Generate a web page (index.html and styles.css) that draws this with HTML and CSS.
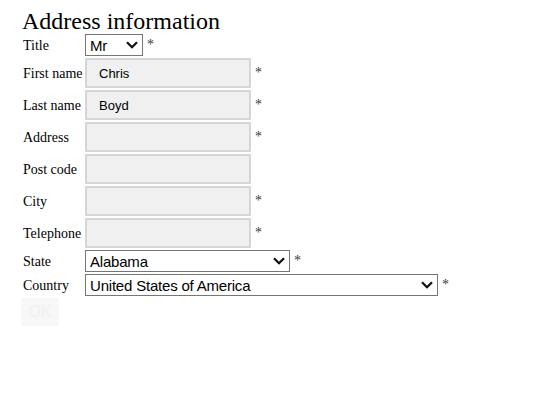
FILE: index.html
```html
<!DOCTYPE html>
<html lang="en">
<head>
  <meta charset="UTF-8" />
  <title>Address information</title>
  <link rel="stylesheet" href="styles.css">
</head>
<body>
  <h2 class="page-title">Address information</h2>

  <div class="address-form">
    <label class="field-label">Title</label>
    <div class="field">
      <span class="select-wrap">
        <select class="select select-title">
          <option>Mr</option>
          <option>Mrs</option>
          <option>Ms</option>
        </select>
        <svg class="chevron" width="12" height="8" viewBox="0 0 12 8"><path d="M1 1.2l5 5 5-5" fill="none" stroke="#111" stroke-width="2.3"/></svg>
      </span>
      <span class="required">*</span>
    </div>

    <label class="field-label">First name</label>
    <div class="field">
      <input type="text" class="text-input" value="Chris">
      <span class="required">*</span>
    </div>

    <label class="field-label">Last name</label>
    <div class="field">
      <input type="text" class="text-input" value="Boyd">
      <span class="required">*</span>
    </div>

    <label class="field-label">Address</label>
    <div class="field">
      <input type="text" class="text-input">
      <span class="required">*</span>
    </div>

    <label class="field-label">Post code</label>
    <div class="field">
      <input type="text" class="text-input">
    </div>

    <label class="field-label">City</label>
    <div class="field">
      <input type="text" class="text-input">
      <span class="required">*</span>
    </div>

    <label class="field-label">Telephone</label>
    <div class="field">
      <input type="text" class="text-input">
      <span class="required">*</span>
    </div>

    <label class="field-label">State</label>
    <div class="field">
      <span class="select-wrap">
        <select class="select select-state">
          <option>Alabama</option>
          <option>Alaska</option>
        </select>
        <svg class="chevron" width="12" height="8" viewBox="0 0 12 8"><path d="M1 1.2l5 5 5-5" fill="none" stroke="#111" stroke-width="2.3"/></svg>
      </span>
      <span class="required">*</span>
    </div>

    <label class="field-label">Country</label>
    <div class="field">
      <span class="select-wrap">
        <select class="select select-country">
          <option>United States of America</option>
          <option>Canada</option>
        </select>
        <svg class="chevron" width="12" height="8" viewBox="0 0 12 8"><path d="M1 1.2l5 5 5-5" fill="none" stroke="#111" stroke-width="2.3"/></svg>
      </span>
      <span class="required">*</span>
    </div>
  </div>

  <button class="ok-button">OK</button>
</body>
</html>
```

FILE: styles.css
```css
body {
  margin: 8px;
  font-family: "Liberation Serif", "Times New Roman", serif;
  font-size: 14px;
  color: #000;
  background-color: #fff;
}
.page-title {
  margin: 0 0 0 14px;
  font-size: 24px;
  font-weight: normal;
  line-height: 26px;
}
.address-form {
  display: grid;
  grid-template-columns: 62px auto;
  row-gap: 2px;
  align-items: center;
  margin-left: 15px;
}
.field-label {
  line-height: 16px;
  padding-top: 1px;
}
.field {
  display: flex;
  align-items: center;
  gap: 4px;
}
.text-input {
  box-sizing: border-box;
  width: 166px;
  height: 30px;
  margin: 0;
  padding: 0 12px;
  border: 2px solid #d6d6d6;
  background-color: #f0f0f0;
  font-family: "Liberation Sans", Arial, sans-serif;
  font-size: 13px;
  color: #000;
  outline: none;
}
.select-wrap {
  position: relative;
  display: flex;
}
.select {
  appearance: none;
  -webkit-appearance: none;
  box-sizing: border-box;
  height: 22px;
  margin: 0;
  padding: 0 0 0 4px;
  border: 1px solid #767676;
  border-radius: 0;
  background-color: #fff;
  font-family: "Liberation Sans", Arial, sans-serif;
  font-size: 15px;
  letter-spacing: -0.2px;
  color: #000;
}
.select-title {
  width: 58px;
}
.select-state {
  width: 205px;
}
.select-country {
  width: 353px;
}
.chevron {
  position: absolute;
  right: 5px;
  top: 7px;
  pointer-events: none;
}
.required {
  color: #3a3a3a;
  font-size: 14px;
  line-height: 14px;
  margin-top: 0;
}
.ok-button {
  display: block;
  width: 38px;
  height: 28px;
  margin: 2px 0 0 13px;
  padding: 0;
  border: none;
  background-color: #f7f7f7;
  color: #f0f0f0;
  font-family: "Liberation Sans", Arial, sans-serif;
  font-size: 16px;
}
```
